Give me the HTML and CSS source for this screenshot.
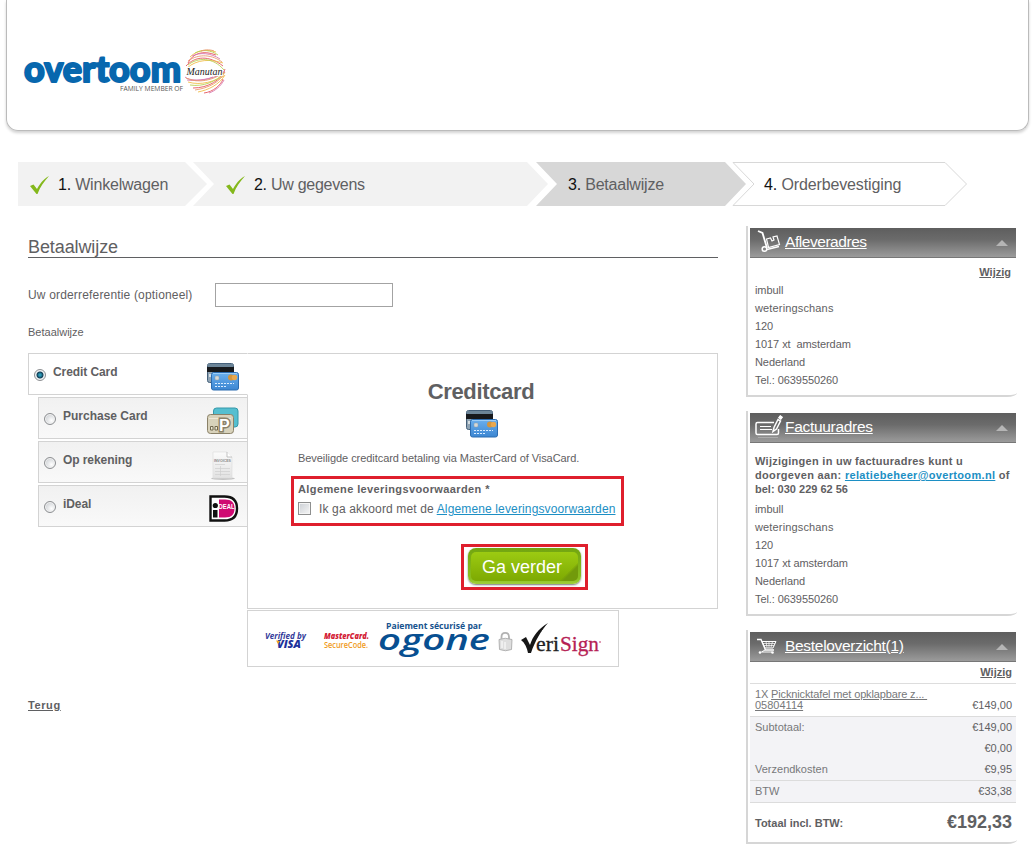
FILE: index.html
```html
<!DOCTYPE html>
<html lang="nl">
<head>
<meta charset="utf-8">
<title>Overtoom - Betaalwijze</title>
<link rel="stylesheet" href="styles.css">
</head>
<body>
<svg class="defs" width="0" height="0" aria-hidden="true">
  <defs>
    <linearGradient id="blue" x1="0" y1="0" x2="0" y2="1"><stop offset="0" stop-color="#6bb0ee"/><stop offset="1" stop-color="#3c86d2"/></linearGradient>
    <linearGradient id="paper" x1="0" y1="0" x2="0" y2="1"><stop offset="0" stop-color="#fbfbfb"/><stop offset="1" stop-color="#e2e2e2"/></linearGradient>
    <symbol id="cards" viewBox="0 0 34 28">
      <rect x="1.500" y=".5" width="26" height="19" rx="2" fill="#8fa3b3" stroke="#45607a"/>
      <path d="M2 1h25v3H2z" fill="#6c8598"/><path d="M1 4h27v5H1z" fill="#17191c"/>
      <path d="M3 11h22v3H3z" fill="#d5dde2"/>
      <rect x="5.500" y="9.500" width="27" height="17.500" rx="2" fill="url(#blue)" stroke="#2c6cb0"/>
      <path d="M7 10.500h24" stroke="#9bcdf8"/>
      <rect x="9" y="13" width="4" height="4" rx="1" fill="#d5d9d8" stroke="#8c9ba5" stroke-width=".5"/>
      <circle cx="25" cy="14.500" r="3" fill="#d3953e"/><circle cx="28.500" cy="14.500" r="2.700" fill="#e9a84f"/>
      <path d="M9 20.500h19M9 23.500h11" stroke="#d9ecff" stroke-dasharray="2 1"/>
    </symbol>
    <symbol id="tick" viewBox="0 0 20 18">
      <path d="M0 10l3.500-1.500L7 13C10 7.500 13 3.500 19 0 14 5.500 10 11 7.500 18H6.500z" fill="#84b81c"/>
    </symbol>
  </defs>
</svg>

<header class="header">
  <svg class="logo" width="206" height="48" viewBox="0 0 206 48">
    <text class="logo-name" x="1" y="33.500" textLength="157" lengthAdjust="spacingAndGlyphs">overtoom</text>
    <text class="logo-sub" x="97" y="42.500" textLength="63" lengthAdjust="spacingAndGlyphs">FAMILY MEMBER OF</text>
    <g fill="none" stroke-width=".9">
      <g stroke="#e4575f">
        <path d="M165 15C170 5 180 2 193 7M163 18C172 8 186 7 200 18M170 40C185 40 199 32 202 21M181 45C190 44 198 37 200 31"/>
      </g>
      <g stroke="#f1bd4b">
        <path d="M167 9C174 2 184 1 193 4M164 20C174 11 188 11 200 15M165 34C178 38 192 33 201 28M175 44C185 42 196 37 202 27"/>
      </g>
      <g stroke="#b9cf57">
        <path d="M172 5C179 1 188 2 195 7M165 17C175 9 190 9 201 22M167 37C180 39 193 34 202 24"/>
      </g>
      <g stroke="#d77bb0">
        <path d="M169 8C177 4 188 5 197 11M162 29C166 33 180 33 190 29M164 32C178 34 194 30 202 23M186 45C192 43 198 38 201 32"/>
      </g>
      <g stroke="#e99b70">
        <path d="M165 13C176 5 190 7 199 14M163 30C176 36 190 32 200 25M172 42C186 40 197 34 202 24M178 3C183 1 189 2 191 3"/>
      </g>
    </g>
    <text class="logo-script" x="163.500" y="26.500" textLength="36" lengthAdjust="spacingAndGlyphs">Manutan</text>
  </svg>
</header>

<ol class="steps">
  <li class="step step-1"><svg class="tick" width="20" height="18"><use href="#tick"/></svg><span><b>1.</b> Winkelwagen</span></li>
  <li class="step step-2"><svg class="tick" width="20" height="18"><use href="#tick"/></svg><span><b>2.</b> Uw gegevens</span></li>
  <li class="step step-3"><span><b>3.</b> Betaalwijze</span></li>
  <li class="step step-4">
    <svg class="outline" width="236" height="44"><path d="M1 .5h212l21.500 21.500L213 43.500H1L22 22z" fill="#fff" stroke="#d8d8d8"/></svg>
    <span><b>4.</b> Orderbevestiging</span>
  </li>
</ol>

<div class="columns">
  <main class="main">
    <h1 class="title">Betaalwijze</h1>
    <div class="reference">
      <label for="ref">Uw orderreferentie (optioneel)</label>
      <input id="ref" class="ref-input" type="text">
    </div>
    <p class="method-label">Betaalwijze</p>

    <div class="payment">
      <div class="tabs">
        <div class="tab tab-active"><span class="radio radio-on"></span><span class="tab-name">Credit Card</span>
          <svg class="tab-icon" width="34" height="28"><use href="#cards"/></svg></div>
        <div class="tab"><span class="radio"></span><span class="tab-name n-purchase">Purchase Card</span>
          <svg class="tab-icon" width="34" height="28" viewBox="0 0 34 28">
            <rect x="7.500" y="1" width="24.500" height="19" rx="3" fill="#55bfd0" stroke="#3498a9"/>
            <rect x="1.500" y="7.500" width="26" height="19" rx="3" fill="#d8d2bb" stroke="#8a8168"/>
            <path d="M3 11.500h22" stroke="#eee9d8"/>
            <path d="M4.500 19.500h2.500v3.500H4.500zM9 19.500h2.500v3.500H9z" fill="#eee9d8" stroke="#70684f"/>
            <text class="p-mark" x="13" y="24">P</text>
          </svg></div>
        <div class="tab"><span class="radio"></span><span class="tab-name">Op rekening</span>
          <svg class="tab-icon" width="34" height="30" viewBox="0 0 34 30">
            <ellipse cx="17" cy="27.500" rx="12" ry="1.500" fill="#c4c4c4"/>
            <path d="M7 1h14l5 5v21H7z" fill="url(#paper)" stroke="#dedede" stroke-width=".7"/>
            <path d="M21 1v5h5" fill="#fff" stroke="#b4b4b4" stroke-width=".8"/>
            <text class="invoice" x="8" y="10.500" textLength="17" lengthAdjust="spacingAndGlyphs">INVOICES</text>
            <path d="M9 13.500h10M9 17.500h15M9 20.500h15M9 23.500h15M14.500 15v10" stroke="#cfcfcf" stroke-width=".7"/>
          </svg></div>
        <div class="tab"><span class="radio"></span><span class="tab-name">iDeal</span>
          <svg class="tab-icon ideal" width="30" height="27" viewBox="0 0 30 27">
            <path d="M1.500 1.500h14C24 1.500 28 6 28 13.500S24 25.500 15.500 25.500h-14z" fill="#fff" stroke="#111" stroke-width="2.400"/>
            <path d="M10 4.500h6c6.500 0 9.500 3 9.500 9s-3 9-9.500 9h-6z" fill="#cf0a72"/>
            <circle cx="6.300" cy="10.500" r="2.600" fill="#111"/><path d="M4 15h4.500v7.500H4z" fill="#111"/>
            <text class="ideal-text" x="9.500" y="13.500" textLength="16" lengthAdjust="spacingAndGlyphs">DEAL</text>
          </svg></div>
      </div>

      <section class="panel">
        <h2 class="panel-title">Creditcard</h2>
        <svg class="panel-icon" width="34" height="28"><use href="#cards"/></svg>
        <p class="panel-text">Beveiligde creditcard betaling via MasterCard of VisaCard.</p>
        <div class="terms">
          <strong class="terms-title">Algemene leveringsvoorwaarden *</strong>
          <div class="terms-row"><span class="checkbox"></span><span>Ik ga akkoord met de <a class="link" href="#">Algemene leveringsvoorwaarden</a></span></div>
        </div>
        <div class="submit"><button class="button" type="button"><span>Ga verder</span></button></div>
      </section>
    </div>

    <div class="trust">
      <svg width="370" height="55" viewBox="0 0 370 55">
        <g class="myriad">
          <text class="verified" x="17" y="28" textLength="41" lengthAdjust="spacingAndGlyphs">Verified by</text>
          <text class="visa" x="29" y="37" textLength="24" lengthAdjust="spacingAndGlyphs">VISA</text>
          <path d="M28 29.500l4 .5-2 3z" fill="#f0a61e"/>
          <text class="mastercard" x="76" y="28" textLength="45" lengthAdjust="spacingAndGlyphs">MasterCard.</text>
          <text class="securecode" x="76" y="37" textLength="44" lengthAdjust="spacingAndGlyphs">SecureCode.</text>
          <text class="paiement" x="138" y="18" textLength="96" lengthAdjust="spacingAndGlyphs">Paiement sécurisé par</text>
          <text class="ogone" x="130" y="39" textLength="112" lengthAdjust="spacingAndGlyphs">ogone</text>
        </g>
        <path d="M253.500 29v-3c0-5.500 7.500-5.500 7.500 0v3" fill="none" stroke="#b2b2b2" stroke-width="1.800"/>
        <path d="M251 28.500q6-2.500 13 0l-.5 10q-6 2.500-12 0z" fill="#dedede" stroke="#a3a3a3" stroke-width=".8"/>
        <path d="M254 30v7M257 31v7" stroke="#fff"/>
        <path d="M273 29l5-3 4 8C285 25 290 18 300 12 293 20 287 30 283 42h-3C279 37 277 32 273 29z" fill="#171717"/>
        <path d="M291 18l8-7M294 20l6-7" stroke="#fff" stroke-width=".8" stroke-dasharray="1.500 1.500"/>
        <text class="veri" x="288" y="40" textLength="23" lengthAdjust="spacingAndGlyphs">eri</text>
        <text class="sign" x="312" y="40" textLength="39" lengthAdjust="spacingAndGlyphs">Sign</text>
        <circle cx="352" cy="31" r=".8" fill="#b61e55"/>
      </svg>
    </div>
    <a class="back" href="#">Terug</a>
  </main>

  <aside class="side">
    <section class="card card-delivery">
      <h3 class="card-head">
        <svg class="head-icon" width="28" height="26" viewBox="0 0 28 26" fill="none" stroke="#fff">
          <path d="M3 3l4.500 2L12 20" stroke-width="1.800"/><circle cx="9.500" cy="21" r="2.300" stroke-width="1.500"/>
          <path d="M12 21.500l12-3" stroke-width="1.700"/><path d="M11.500 11l4-1 1.500 3 2-1-1-3 4-1 2.500 8.500-11 3z" stroke-width="1.200"/>
        </svg>
        <a class="head-aflever" href="#">Afleveradres</a><i class="arrow"></i>
      </h3>
      <a class="edit" href="#">Wijzig</a>
      <ul class="address">
        <li>imbull</li><li class="street">weteringschans</li><li>120</li><li>1017 xt&nbsp; amsterdam</li><li>Nederland</li><li>Tel.: 0639550260</li>
      </ul>
    </section>

    <section class="card card-invoice">
      <h3 class="card-head">
        <svg class="head-icon" width="28" height="26" viewBox="0 0 28 26" fill="none" stroke="#fff">
          <path d="M19 9.500H2.500q-1.500 0-1.500 1.500v9q0 1.500 1.500 1.500H22q1.500 0 1.500-1.500v-4" stroke-width="1.500"/>
          <path d="M5 13.500h11M5 16.500h12"/><path d="M18 18.500l1-4 4-8 2.500 1.500-4 8z" stroke-width="1.500"/><path d="M23.500 5l1.500-2.500 2.500 1.500-1.500 2.500z" fill="#fff"/>
          <path d="M3 24.500h20" opacity=".25"/>
        </svg>
        <a href="#">Factuuradres</a><i class="arrow"></i>
      </h3>
      <p class="notice"><span class="n1">Wijzigingen in uw factuuradres kunt u</span><br><span class="n2">doorgeven aan: <a class="link" href="#">relatiebeheer@overtoom.nl</a> of</span><br><span>bel: 030 229 62 56</span></p>
      <ul class="address">
        <li>imbull</li><li class="street">weteringschans</li><li>120</li><li>1017 xt amsterdam</li><li>Nederland</li><li>Tel.: 0639550260</li>
      </ul>
    </section>

    <section class="card card-order">
      <h3 class="card-head">
        <svg class="head-icon" width="28" height="26" viewBox="0 0 28 26" fill="none" stroke="#fff">
          <path d="M2 7.500h4l4.500 10.500H19" stroke-width="1.400"/><path d="M7 9.500h14l-3 6.500H10z" stroke-width="1"/>
          <path d="M8 11.500h12M9 13.500h10M11 9.500l1 6M14 9.500v6M17.500 9.500l-1.500 6" stroke-width=".7"/>
          <path d="M10 18l-3.500 2H17" stroke-width="1"/><circle cx="5" cy="20.500" r="1.300" fill="#fff" stroke="none"/><circle cx="17.500" cy="20.500" r="1.300" fill="#fff" stroke="none"/>
        </svg>
        <a href="#">Besteloverzicht(1)</a><i class="arrow"></i>
      </h3>
      <a class="edit edit-order" href="#">Wijzig</a>
      <div class="item"><span class="item-name">1X <a href="#">Picknicktafel met opklapbare z...&nbsp;</a><br><a class="sku" href="#">05804114</a></span><span class="price">€149,00</span></div>
      <dl class="sums">
        <div><dt>Subtotaal:</dt><dd>€149,00</dd></div>
        <div><dt></dt><dd>€0,00</dd></div>
        <div><dt>Verzendkosten</dt><dd>€9,95</dd></div>
        <div class="vat"><dt>BTW</dt><dd>€33,38</dd></div>
      </dl>
      <div class="total"><span>Totaal incl. BTW:</span><strong>€192,33</strong></div>
    </section>
  </aside>
</div>
</body>
</html>
```

FILE: styles.css
```css
* { box-sizing: border-box; }
body {
  margin: 0;
  height: 852px;
  overflow: hidden;
  background: #fff;
  color: #5f6062;
  font: 11px/18px "Liberation Sans", Arial, sans-serif;
}
h1, h2, h3, p, ul, ol, dl, dd { margin: 0; padding: 0; font-weight: normal; }
ul, ol { list-style: none; }
a { color: inherit; }
.defs { position: absolute; }
.link { color: #1c8fc4; }

.header {
  width: 1023px;
  height: 131px;
  margin-left: 6px;
  padding: 48px 0 0 16px;
  border: solid #bbb;
  border-width: 0 1px 1px;
  border-radius: 0 0 12px 12px;
  box-shadow: 0 2px 3px rgba(0, 0, 0, .18);
}
.logo { display: block; overflow: visible; }
.logo-name { font: 900 36px Lato, sans-serif; fill: #0767ae; stroke: #0767ae; stroke-width: 1.9; stroke-linejoin: round; }
.logo-sub { font: 7px "Open Sans", sans-serif; fill: #555; }
.logo-script { font: italic 11px "Liberation Serif", serif; fill: #222; stroke: #fff; stroke-width: 2; paint-order: stroke; }

.steps { display: flex; margin: 31px 0 0 18px; height: 44px; font-size: 16px; line-height: 44px; }
.step { position: relative; display: flex; align-items: center; height: 44px; background: #f2f2f2; }
.step b { color: #111; font-weight: normal; }
.step span { margin-top: 1px; white-space: nowrap; }
.tick { margin: 1px 8px 0 0; }
.step-1 { width: 189px; padding-left: 12px; letter-spacing: -.2px; clip-path: polygon(0 0, 167px 0, 189px 50%, 167px 100%, 0 100%); }
.step-2 { width: 355px; margin-left: -14px; padding-left: 33px; letter-spacing: -.28px; clip-path: polygon(0 0, 334px 0, 355px 50%, 334px 100%, 0 100%, 21px 50%); }
.step-3 { width: 210px; margin-left: -12px; padding-left: 32px; letter-spacing: -.2px; background: #d7d7d7; clip-path: polygon(0 0, 189px 0, 210px 50%, 189px 100%, 0 100%, 21px 50%); }
.step-4 { width: 236px; margin-left: -14px; padding-left: 32px; letter-spacing: -.13px; background: none; }
.step-4 span { position: relative; }
.outline { position: absolute; left: 0; top: 0; }

.columns { display: flex; align-items: flex-start; }
.main { width: 690px; margin: 30px 28px 0; }
.title { height: 22px; border-bottom: 1px solid #5f6062; font-size: 18px; line-height: 22px; letter-spacing: -.1px; }
.reference { display: flex; align-items: center; margin-top: 25px; height: 24px; font-size: 12px; letter-spacing: .17px; }
.reference label { width: 187px; }
.ref-input { width: 178px; height: 24px; border: 1px solid #a3a3a3; background: #fff; padding: 0; }
.method-label { margin-top: 16px; }

.payment { display: flex; margin-top: 12px; align-items: flex-start; }
.tabs { position: relative; width: 220px; margin-right: -1px; display: grid; gap: 2px; justify-items: end; }
.tab {
  display: flex;
  width: 210px;
  height: 42px;
  padding-left: 5px;
  border: 1px solid #d3d3d3;
  background: linear-gradient(#f1f1f1, #f9f9f9);
  font-size: 12px;
  font-weight: bold;
}
.tab-active { width: 220px; background: #fff; border-right-color: #fff; }
.tab-name { margin: 9px auto 0 7px; letter-spacing: -.08px; }
.n-purchase { letter-spacing: 0; }
.tab-icon { flex: none; margin: 9px 7px 0 0; }
.ideal { margin-right: 8px; }
.p-mark { font: bold 16px "Liberation Sans", sans-serif; fill: #fff; stroke: #8a8168; stroke-width: 3; paint-order: stroke; }
.invoice { font: bold 3.5px "Liberation Sans", sans-serif; fill: #888; }
.ideal-text { font: bold 7px "Liberation Sans", sans-serif; fill: #fff; }
.radio {
  width: 12px;
  height: 12px;
  margin: 15px 0 0 0;
  border: 1px solid #8d8f92;
  border-radius: 50%;
  background: radial-gradient(circle at 65% 65%, #fff, #d2d5d8 70%);
  box-shadow: inset 0 0 0 1px #f3f3f3;
}
.radio-on { background: radial-gradient(circle, #2d9bb8 0 1px, #123c54 3px, #e8f0f4 4px); }

.panel {
  display: flex;
  flex-direction: column;
  align-items: flex-start;
  width: 471px;
  height: 256px;
  padding: 27px 0 0 43px;
  border: 1px solid #d3d3d3;
}
.panel-title { align-self: center; margin-left: -46px; font-size: 22px; line-height: 22px; font-weight: bold; letter-spacing: -.35px; }
.panel-icon { align-self: center; margin: 7px 0 0 -44px; }
.panel-text { margin: 11px 0 0 7px; letter-spacing: -.06px; }
.terms { width: 333px; height: 50px; margin-top: 9px; padding: 1px 4px; border: 3px solid #df1f2d; }
.terms-title { display: block; letter-spacing: .39px; }
.terms-row { display: flex; align-items: center; gap: 8px; margin-top: 2px; font-size: 12px; letter-spacing: .14px; white-space: nowrap; }
.checkbox { flex: none; width: 13px; height: 13px; margin-top: -2px; border: 1px solid #8e8f8f; background: linear-gradient(135deg, #cbcfd5, #f6f6f6); box-shadow: inset 0 0 0 1px #f4f4f4; }
.submit { margin: 18px 0 0 170px; width: 127px; height: 46px; padding: 1px 4px; border: 3px solid #df1f2d; }
.button {
  display: block;
  width: 113px;
  height: 36px;
  padding: 3px;
  border: 0;
  border-radius: 8px;
  background: linear-gradient(#72a510, #8cbf20 85%, #9fcf3b);
  box-shadow: 0 1px 2px #777;
  color: #fff;
  font: 18px/31px "Liberation Sans", Arial, sans-serif;
}
.button span {
  display: block;
  height: 29px;
  border-radius: 5px;
  padding-right: 5px;
  background: linear-gradient(135deg, transparent 86%, #729a0b 89%), linear-gradient(#9ccb12, #7da902);
}

.trust { width: 372px; height: 57px; margin: 1px 0 0 219px; border: 1px solid #d3d3d3; }
.trust svg { display: block; }
.myriad { font-family: "Open Sans", "Noto Sans", sans-serif; }
.verified { font-size: 9px; font-style: italic; font-weight: 700; fill: #343b9a; }
.visa { font-size: 11px; font-style: italic; font-weight: 800; fill: #20319b; }
.mastercard { font-size: 9px; font-style: italic; font-weight: 800; fill: #d32035; }
.securecode { font-size: 9px; font-weight: 600; fill: #f09b22; }
.paiement { font-size: 9px; font-weight: 700; fill: #17538e; }
.ogone { font-size: 29px; font-style: italic; font-weight: 600; fill: #074f91; }
.veri, .sign { font: 22px "Liberation Serif", serif; fill: #222; stroke: #222; stroke-width: .3; }
.sign { fill: #b61e55; stroke: #b61e55; }
.back { display: inline-block; margin-top: 29px; font-weight: bold; letter-spacing: .6px; }

.side { width: 271px; margin-top: 20px; display: grid; gap: 14px; }
.card {
  padding: 2px 1px 0 2px;
  border-left: 2px solid #d6d6d6;
  border-bottom: 2px solid #d6d6d6;
  border-bottom-right-radius: 10px 4px;
}
.card-delivery { height: 171px; }
.card-invoice { height: 205px; }
.card-order { height: 214px; }
.card-head {
  display: flex;
  height: 30px;
  padding: 0 8px 0 5px;
  border-bottom: 1px solid #777;
  background: linear-gradient(#5e5e5e, #6b6b6b 40%, #9b9b9b);
  color: #fff;
  font-size: 15.5px;
  line-height: 28px;
  letter-spacing: -.3px;
}
.head-aflever { letter-spacing: -.45px; }
.head-icon { margin-right: 2px; flex: none; }
.arrow { margin: 12px 0 0 auto; align-self: flex-start; border: solid transparent; border-width: 0 6px 6px; border-bottom-color: #b5b5b5; }
.edit { display: block; margin: 5px 5px 0 0; text-align: right; font-weight: bold; }
.address { padding-left: 5px; letter-spacing: -.08px; }
.street { letter-spacing: .15px; }
.notice { margin: 11px 0 4px 5px; font-weight: bold; line-height: 14px; white-space: nowrap; }
.n1 { letter-spacing: .27px; }
.n2 { letter-spacing: .33px; }
.edit-order { margin: 1px 4px 0 0; height: 20px; line-height: 18px; }
.item { display: flex; justify-content: space-between; align-items: flex-end; height: 33px; padding: 0 4px 5px 5px; border-top: 1px solid #ddd; line-height: 11px; }
.item-name { white-space: nowrap; color: #77787a; letter-spacing: -.14px; }
.sku { letter-spacing: 0; }
.price { flex: none; }
.sums { background: #f3f3f6; border: solid #dcdcdc; border-width: 1px 0; }
.sums div { display: flex; justify-content: space-between; height: 21px; padding: 0 4px 0 5px; line-height: 21px; }
.sums dt { color: #77787a; }
.sums .vat { height: 22px; border-top: 1px solid #dcdcdc; }
.total { display: flex; justify-content: space-between; align-items: center; height: 40px; padding: 0 4px 0 5px; font-weight: bold; }
.total strong { font-size: 18px; line-height: 16px; padding-bottom: 2px; }
```
